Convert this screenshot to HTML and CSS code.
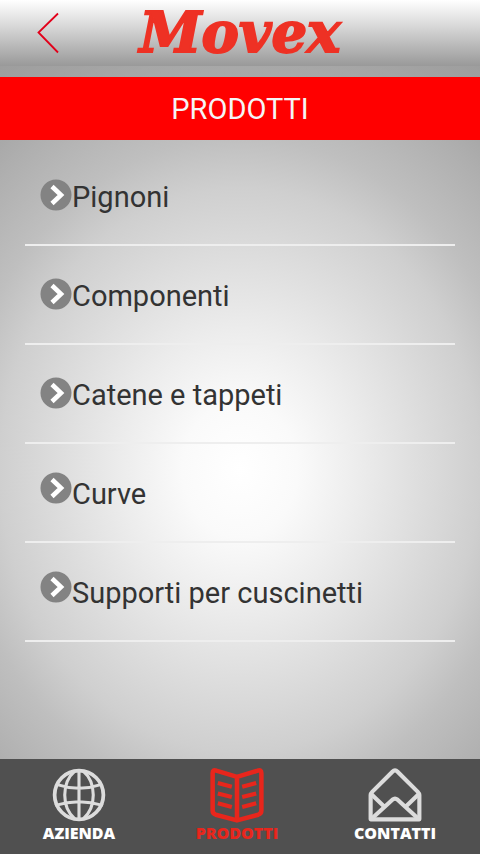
FILE: index.html
```html
<!DOCTYPE html>
<html lang="it">
<head>
<meta charset="utf-8">
<meta name="viewport" content="width=device-width, initial-scale=1">
<title>Movex - Prodotti</title>
<link rel="stylesheet" href="styles.css">
</head>
<body>
<svg class="defs" aria-hidden="true">
  <symbol id="arrow" viewBox="0 0 32 32">
    <circle cx="16" cy="16" r="15.5" fill="#838383"/>
    <path d="M12 7.500 L21 16 L12 24.500" fill="none" stroke="#fff" stroke-width="4.600"/>
  </symbol>
</svg>
<header class="topbar">
  <a class="back" href="#" aria-label="Indietro">
    <svg width="22" height="42" viewBox="0 0 22 42"><path d="M21 1.5 L1.5 20.5 L21 40.5" fill="none" stroke="#e2001a" stroke-width="1.8"/></svg>
  </a>
  <span class="logo">Movex</span>
</header>
<h1 class="title">PRODOTTI</h1>
<main class="content">
  <ul class="list">
    <li><a class="item" href="#"><svg class="arrow"><use href="#arrow"/></svg><span>Pignoni</span></a></li>
    <li><a class="item" href="#"><svg class="arrow"><use href="#arrow"/></svg><span>Componenti</span></a></li>
    <li><a class="item" href="#"><svg class="arrow"><use href="#arrow"/></svg><span>Catene e tappeti</span></a></li>
    <li><a class="item item-high" href="#"><svg class="arrow"><use href="#arrow"/></svg><span>Curve</span></a></li>
    <li><a class="item item-high" href="#"><svg class="arrow"><use href="#arrow"/></svg><span>Supporti per cuscinetti</span></a></li>
  </ul>
</main>
<nav class="tabs">
  <a class="tab" href="#">
    <svg class="tab-icon" viewBox="0 0 54 54" fill="none" stroke="#dcdcdc" stroke-width="3">
      <circle cx="27" cy="27" r="23.500" stroke-width="3.600"/>
      <path d="M27 3V51M23 4C10 15 10 39 23 50M31 4C44 15 44 39 31 50M6 17Q27 24 48 17M4 37Q27 30 50 37"/>
    </svg>
    <span>AZIENDA</span>
  </a>
  <a class="tab active" href="#" aria-current="page">
    <svg class="tab-icon" viewBox="0 0 54 54" fill="none" stroke="#e8261c" stroke-width="4.400" stroke-linejoin="round">
      <path d="M27 9.500L7 3.500Q3.500 2 3.500 6V42Q3.500 45 6.500 46L27 51.500L47.500 46Q50.500 45 50.500 42V6Q50.500 2 47 3.500ZV51.500"/>
      <path stroke-width="4" d="M8.500 15.500L22 19M8.500 25.500L22 29M8.500 35L22 38.500M45.500 15.500L32 19M45.500 25.500L32 29M45.500 35L32 38.500"/>
    </svg>
    <span>PRODOTTI</span>
  </a>
  <a class="tab" href="#">
    <svg class="tab-icon" viewBox="0 0 54 54" fill="none" stroke="#dcdcdc" stroke-width="4" stroke-linejoin="round">
      <path d="M3.500 27Q3.500 25.500 5 24L24.500 4.500Q27 2 29.500 4.500L49 24Q50.500 25.500 50.500 27V50.500H3.500Z"/>
      <path d="M4 26L17 38.500M50 26L37 38.500M5 49.500L24.500 31.500Q27 29.500 29.500 31.500L49 49.500"/>
    </svg>
    <span>CONTATTI</span>
  </a>
</nav>
</body>
</html>
```

FILE: styles.css
```css
* {
  box-sizing: border-box;
}

body {
  margin: 0;
  min-height: 100vh;
  display: flex;
  flex-direction: column;
  font-family: Roboto, "Liberation Sans", sans-serif;
  background: radial-gradient(ellipse 100% 66% at 50% 55%, #fff 0%, #fafafa 12%, #ececec 25%, #cfcfcf 50%, #bfbfbf 59%, #afafaf 72%, #a4a4a4 80%, #8c8c8c 100%);
}

a {
  color: inherit;
  text-decoration: none;
}

.defs {
  position: absolute;
  width: 0;
  height: 0;
}

.topbar {
  display: grid;
  grid-template-columns: 1fr auto 1fr;
  align-items: start;
  height: 77px;
  background: linear-gradient(#fff 0, #d5d5d5 28px, #999 66px, #a0a0a080 66px);
}

.back {
  display: flex;
  margin: 12px 0 0 37px;
}

.logo {
  font: italic bold 56px/64px "DejaVu Serif", serif;
  color: #ee3124;
  -webkit-text-stroke: 2px #ee3124;
}

.title {
  margin: 0;
  background: #f00;
  color: #f5f5f5;
  font-size: 29px;
  font-weight: 400;
  line-height: 63px;
  padding-top: 1px;
  height: 63px;
  text-align: center;
}

.content {
  flex: 1;
  padding: 7px 25px;
}

.list {
  list-style: none;
  margin: 0;
  padding: 0;
}

.item {
  display: flex;
  align-items: flex-start;
  height: 99px;
  padding: 32px 15px 0;
  border-bottom: 2px solid #eee;
  color: #333;
  font-size: 29px;
  line-height: 36px;
}

.arrow {
  width: 32px;
  height: 32px;
  flex: none;
}

.item-high {
  padding-top: 28px;
}

.item-high span {
  padding-top: 4px;
}

.tabs {
  display: grid;
  grid-template-columns: repeat(3, 1fr);
  height: 95px;
  padding-right: 6px;
  background: #505050;
}

.tab {
  display: flex;
  flex-direction: column;
  align-items: center;
  padding-top: 8px;
  color: #fff;
  font: 800 16px/20px "Open Sans", "Noto Sans", sans-serif;
}

.tab-icon {
  width: 56px;
  height: 56px;
}

.active {
  color: #e8261c;
}
```
